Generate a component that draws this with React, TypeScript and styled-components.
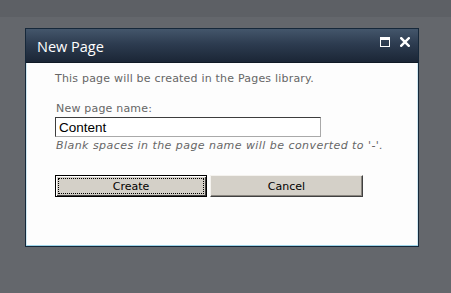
import React from "react";
import styled, { createGlobalStyle } from "styled-components";

const Global = createGlobalStyle`
  html, body { margin: 0; padding: 0; }
  body { background: #64676c; width: 451px; height: 293px; overflow: hidden; }
`;

const Page = styled.div`
  width: 451px;
  height: 293px;
  display: flex;
  flex-direction: column;
`;

const TopBand = styled.div`
  height: 17px;
  background: #5d6065;
  flex: none;
`;

const Stage = styled.div`
  padding: 11px 0 0 25px;
`;

const Dialog = styled.div`
  width: 392px;
  height: 217px;
  border: 1px solid #16283a;
  box-shadow: inset 0 -1px 0 #9fd6ea, inset 1px 0 0 #cfe8f2, inset -1px 0 0 #cfe8f2;
  background: #fdfdfd;
  display: flex;
  flex-direction: column;
`;

const TitleBar = styled.div`
  height: 33px;
  background: linear-gradient(to bottom, #44566b 0%, #2d3c50 45%, #1b2636 100%);
  display: flex;
  align-items: center;
  padding: 0 8px 0 11px;
  border-bottom: 1px solid #101a26;
`;

const Title = styled.div`
  flex: 1;
  color: #ffffff;
  font-family: "Open Sans", "DejaVu Sans", sans-serif;
  font-size: 14.5px;
  padding-top: 2px;
`;

const Controls = styled.div`
  display: flex;
  gap: 10px;
  align-items: center;
  margin-top: -7px;
`;

const Body = styled.div`
  padding: 9px 0 0 29px;
  font-family: "DejaVu Sans", Verdana, sans-serif;
  font-size: 11px;
  letter-spacing: 0.2px;
  color: #666666;
  display: flex;
  flex-direction: column;
`;

const Intro = styled.div`
  line-height: 13px;
`;

const Label = styled.div`
  margin-top: 17px;
  line-height: 13px;
  padding-left: 1px;
`;

const Input = styled.input`
  box-sizing: border-box;
  width: 266px;
  height: 20px;
  margin: 2px 0 0 0;
  padding: 1px 3px 0 3px;
  border: 1px solid #a9a9a9;
  border-top-color: #3d3d3d;
  border-left-color: #3d3d3d;
  outline: none;
  background: #ffffff;
  font-family: "Liberation Sans", Arial, sans-serif;
  font-size: 13.5px;
  letter-spacing: 0;
  color: #000000;
`;

const Hint = styled.div`
  font-style: italic;
  letter-spacing: 0.45px;
  margin-top: 2px;
  line-height: 13px;
  padding-left: 1px;
`;

const Buttons = styled.div`
  display: flex;
  gap: 3px;
  margin-top: 23px;
`;

const Button = styled.button<{ $focused?: boolean }>`
  box-sizing: border-box;
  width: ${(p) => (p.$focused ? 152 : 153)}px;
  height: 22px;
  background: #d4d0c8;
  font-family: "DejaVu Sans", Verdana, sans-serif;
  font-size: 11px;
  letter-spacing: 0;
  color: #000;
  padding: 0;
  position: relative;
  border: 1px solid;
  border-color: ${(p) => (p.$focused ? "#000" : "#f4f2ee #404040 #404040 #f4f2ee")};
  box-shadow: ${(p) =>
    p.$focused
      ? "inset 1px 1px 0 #ffffff, inset -1px -1px 0 #404040"
      : "inset -1px -1px 0 #8a8680"};
  &::after {
    content: "";
    display: ${(p) => (p.$focused ? "block" : "none")};
    position: absolute;
    inset: 2px;
    border: 1px dotted #000;
  }
`;

const MaxIcon = () => (
  <svg width="10" height="10" viewBox="0 0 10 10">
    <rect x="0.5" y="0.5" width="9" height="9" fill="none" stroke="#fff" strokeWidth="1" />
    <rect x="0" y="0" width="10" height="3" fill="#fff" />
  </svg>
);

const CloseIcon = () => (
  <svg width="10" height="10" viewBox="0 0 10 10">
    <path d="M1.2 1.2 L8.8 8.8 M8.8 1.2 L1.2 8.8" stroke="#fff" strokeWidth="2.4" strokeLinecap="square" />
  </svg>
);

export default function App() {
  return (
    <>
      <Global />
      <Page>
        <TopBand />
        <Stage>
          <Dialog>
            <TitleBar>
              <Title>New Page</Title>
              <Controls>
                <MaxIcon />
                <CloseIcon />
              </Controls>
            </TitleBar>
            <Body>
              <Intro>This page will be created in the Pages library.</Intro>
              <Label>New page name:</Label>
              <Input defaultValue="Content" />
              <Hint>Blank spaces in the page name will be converted to '-'.</Hint>
              <Buttons>
                <Button $focused>Create</Button>
                <Button>Cancel</Button>
              </Buttons>
            </Body>
          </Dialog>
        </Stage>
      </Page>
    </>
  );
}
